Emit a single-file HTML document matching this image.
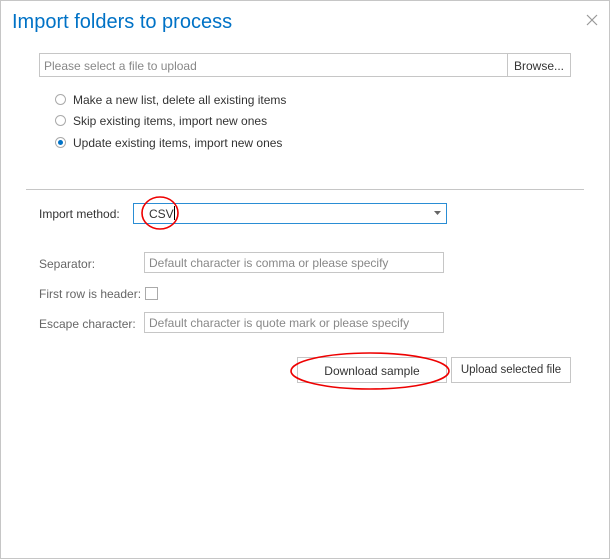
<!DOCTYPE html><html><head><style>
body{margin:0;width:610px;height:559px;background:#fff;font-family:"Liberation Sans",sans-serif;position:relative;overflow:hidden}
.a{position:absolute}
.frame{left:0;top:0;width:608px;height:557px;border:1px solid #c6c6c6}
.t{font-size:12px;color:#333;white-space:nowrap}
.g{color:#666}
.inp{border:1px solid #c6c6c6;box-sizing:border-box;font-size:12px;color:#888;padding:3px 0 0 4px;white-space:nowrap}
.rad{width:11px;height:11px;border:1px solid #aaa;border-radius:50%;box-sizing:border-box}
.btn{border:1px solid #c6c6c6;box-sizing:border-box;font-size:12px;color:#333;text-align:center;background:#fff;white-space:nowrap}
</style></head><body>
<div class="a frame"></div>
<div class="a" style="left:12px;top:11px;font-size:20px;color:#0072c6">Import folders to process</div>
<svg class="a" style="left:586px;top:14px" width="12" height="12"><path d="M1 1L11 11M11 1L1 11" stroke="#999" stroke-width="1.2"/></svg>
<div class="a inp" style="left:39px;top:53px;width:532px;height:24px;padding-top:5px">Please select a file to upload</div>
<div class="a btn" style="left:507px;top:53px;width:64px;height:24px;padding-top:5px">Browse...</div>
<div class="a rad" style="left:55px;top:94px"></div><div class="a t" style="left:73px;top:93px">Make a new list, delete all existing items</div>
<div class="a rad" style="left:55px;top:115px"></div><div class="a t" style="left:73px;top:114px">Skip existing items, import new ones</div>
<div class="a rad" style="left:55px;top:137px"></div><div class="a" style="left:58px;top:140px;width:5px;height:5px;border-radius:50%;background:#0072c6"></div><div class="a t" style="left:73px;top:136px">Update existing items, import new ones</div>
<div class="a" style="left:26px;top:189px;width:558px;height:1px;background:#c6c6c6"></div>
<div class="a t" style="left:39px;top:207px">Import method:</div>
<div class="a" style="left:133px;top:203px;width:314px;height:21px;border:1px solid #2a8dd4;box-sizing:border-box"></div>
<div class="a t" style="left:149px;top:206px">CSV<span style="display:inline-block;width:1px;height:14px;background:#000;vertical-align:-2px"></span></div>
<svg class="a" style="left:434px;top:211px" width="8" height="5"><path d="M0 0H7L3.5 4Z" fill="#666"/></svg>
<svg class="a" style="left:140px;top:195px" width="40" height="36"><ellipse cx="20" cy="18" rx="18" ry="16" fill="none" stroke="#e00" stroke-width="1.6"/></svg>
<div class="a t g" style="left:39px;top:257px">Separator:</div>
<div class="a inp" style="left:144px;top:252px;width:300px;height:21px">Default character is comma or please specify</div>
<div class="a t g" style="left:39px;top:287px">First row is header:</div>
<div class="a" style="left:145px;top:287px;width:13px;height:13px;border:1px solid #aaa;box-sizing:border-box"></div>
<div class="a t g" style="left:39px;top:317px">Escape character:</div>
<div class="a inp" style="left:144px;top:312px;width:300px;height:21px">Default character is quote mark or please specify</div>
<div class="a btn" style="left:297px;top:357px;width:150px;height:26px;padding-top:6px">Download sample</div>
<div class="a btn" style="left:451px;top:357px;width:120px;height:26px;padding-top:6px;font-size:11.5px">Upload selected file</div>
<svg class="a" style="left:289px;top:350px" width="164" height="42"><ellipse cx="81" cy="21" rx="79" ry="18" fill="none" stroke="#e00" stroke-width="1.6"/></svg>
</body></html>
